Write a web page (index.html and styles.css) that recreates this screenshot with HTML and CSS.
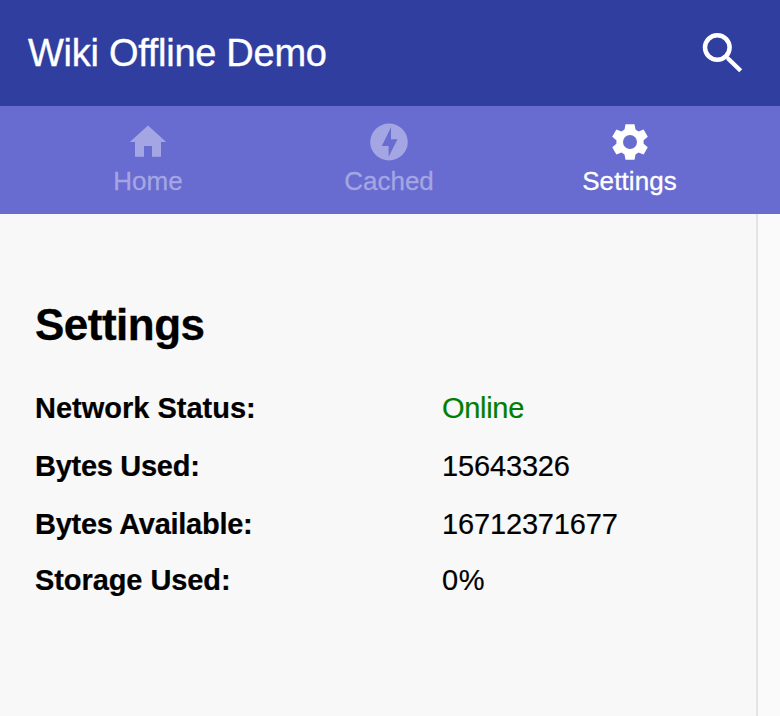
FILE: index.html
```html
<!DOCTYPE html>
<html lang="en">
<head>
<meta charset="utf-8">
<title>Wiki Offline Demo</title>
<link rel="stylesheet" href="styles.css">
</head>
<body>
<header class="header">
  <h1 class="header__title">Wiki Offline Demo</h1>
  <svg class="header__search" viewBox="0 0 48 48"><circle cx="19.3" cy="19.5" r="12.3" fill="none" stroke="currentColor" stroke-width="4.5"/><path d="M28.2 31.8 31.2 28.8 44.2 41.2 41.2 44.2z"/><path d="M27 29 29 27 31.2 29.2 29 31.4z"/></svg>
</header>
<nav class="tabs">
  <a class="tab"><svg class="tab__icon" viewBox="0 0 44 44"><path d="M22 5.5 3.8 22H9v14.8h9V26h8v10.8h9V22h5.2z"/></svg><span class="tab__label tab__label--home">Home</span></a>
  <a class="tab"><svg class="tab__icon" viewBox="0 0 44 44"><path fill-rule="evenodd" d="M22 3.5a18.8 18.5 0 1 0 0 37a18.8 18.5 0 1 0 0-37zM21.6 36.8V26H14.8L24 7.3v12h6.5z"/></svg><span class="tab__label tab__label--cached">Cached</span></a>
  <a class="tab tab--active"><svg class="tab__icon" viewBox="0 0 44 44"><path fill-rule="evenodd" d="M17.5 4.3h9l1 5.3 3 1.8 5.1-1.9 4.2 7.3-4.2 3.5v3.4l4.2 3.5-4.2 7.3-5.1-1.9-3 1.8-1 5.3h-9l-1-5.3-3-1.8-5.1 1.9-4.2-7.3 4.2-3.5v-3.4l-4.2-3.5 4.2-7.3 5.1 1.9 3-1.8zM22 15a7 7 0 1 0 0 14a7 7 0 1 0 0-14z"/></svg><span class="tab__label tab__label--settings">Settings</span></a>
</nav>
<main class="content">
  <h2 class="content__title">Settings</h2>
  <dl class="stats">
    <dt>Network Status:</dt><dd class="online">Online</dd>
    <dt class="used">Bytes Used:</dt><dd>15643326</dd>
    <dt class="available">Bytes Available:</dt><dd>16712371677</dd>
    <dt class="storage">Storage Used:</dt><dd class="percent">0%</dd>
  </dl>
</main>
</body>
</html>
```
FILE: styles.css
```css
* { box-sizing: border-box; }
body {
  margin: 0;
  height: 716px;
  display: flex;
  flex-direction: column;
  overflow: hidden;
  background: #fafafa;
  color: #000;
  font-family: "Liberation Sans", Arial, sans-serif;
}
svg { display: block; fill: currentColor; }
.header {
  height: 106px;
  padding: 0 34px 2px 28px;
  display: flex;
  align-items: center;
  justify-content: space-between;
  background: #303f9f;
  color: #fff;
}
.header__title { margin: 2px 0 0; font-size: 38px; font-weight: 400; letter-spacing: -0.28px; -webkit-text-stroke: 0.35px; }
.header__search { width: 48px; height: 48px; }
.tabs {
  height: 108px;
  padding: 0 30px 0 27px;
  display: grid;
  grid-template-columns: repeat(3, 1fr);
  background: #686bd0;
  color: #fff;
}
.tab {
  padding-top: 14px;
  display: flex;
  flex-direction: column;
  align-items: center;
  color: #a4a6e3;
}
.tab--active { color: #fff; }
.tab__icon { width: 44px; height: 44px; }
.tab__label { margin-top: 2px; font-size: 26px; line-height: 30px; -webkit-text-stroke: 0.3px; }
.tab__label--home { padding-left: 1px; }
.tab__label--cached { padding-left: 1px; }
.tab__label--settings { letter-spacing: 0.1px; }
.content {
  flex: 1;
  width: 758px;
  padding: 86px 35px 0;
  border-right: 2px solid #e4e4e4;
  background: #f8f8f8;
}
.content__title { margin: 0 0 36px; font-size: 44px; line-height: 50px; letter-spacing: -0.5px; -webkit-text-stroke: 0.3px; }
.stats {
  margin: 0;
  display: grid;
  grid-template-columns: 407px 1fr;
  grid-template-rows: 58px 58px 56px 56px;
  font-size: 29px;
  line-height: 44px;
}
.stats dt { font-weight: 700; -webkit-text-stroke: 0.2px; }
.stats .used, .stats .available { letter-spacing: -0.28px; }
.stats .storage { letter-spacing: -0.08px; }
.stats dd { margin: 0; letter-spacing: -0.15px; -webkit-text-stroke: 0.2px; }
.stats .online { color: #008000; letter-spacing: -0.3px; }
.stats .percent { letter-spacing: 0.6px; }
```
